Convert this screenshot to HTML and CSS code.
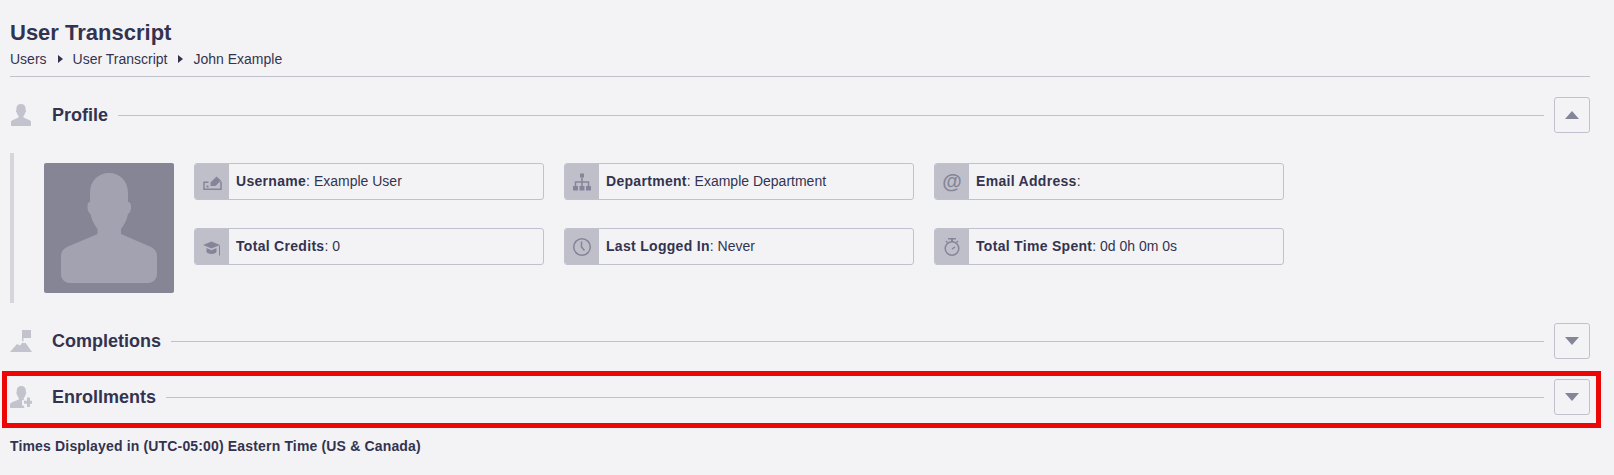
FILE: index.html
```html
<!DOCTYPE html>
<html lang="en">
<head>
<meta charset="utf-8">
<title>User Transcript</title>
<link rel="stylesheet" href="styles.css">
</head>
<body>
<main class="page">
  <header class="page-head">
    <h1 class="page-title">User Transcript</h1>
    <nav class="crumbs">
      <span>Users</span><i class="crumb-caret"></i>
      <span>User Transcript</span><i class="crumb-caret"></i>
      <span>John Example</span>
    </nav>
  </header>

  <section class="section">
    <div class="section-head">
      <span class="section-icon">
        <svg width="22" height="24" viewBox="0 0 22 24"><path class="sec-fill" d="M11 1C8 1 6.400 3 6.400 5.600v1.600c-.7.2-.7 1.700.3 2.200.3 1.400 1 2.600 1.800 3.500v1.700L2.800 17c-1.300.6-1.800 1.400-1.800 2.600V22c0 .6.400 1 1 1h18c.6 0 1-.4 1-1v-2.400c0-1.200-.5-2-1.800-2.600l-5.700-2.400v-1.700c.8-.9 1.500-2.100 1.800-3.500 1-.5 1-2 .3-2.200V5.600C15.600 3 14 1 11 1z"/></svg>
      </span>
      <h2 class="section-title">Profile</h2>
      <span class="section-rule"></span>
      <button class="toggle" type="button" aria-label="Collapse"><i class="tri tri-up"></i></button>
    </div>
    <div class="profile">
      <div class="avatar">
        <svg width="130" height="130" viewBox="0 0 130 130"><path class="avatar-shape" d="M65 10c-11 0-19 8-19 20v9c-2 0-2.500 2-2.500 5s1 6 3 7c1 6 4 11 7 15v5L23 84c-4 2-6 5-6 9v18c0 5 4 9 9 9h78c5 0 9-4 9-9V93c0-4-2-7-6-9L77 71v-5c3-4 6-9 7-15 2-1 3-4 3-7s-.5-5-3-5V30c0-12-8-20-19-20z"/></svg>
      </div>
      <div class="facts">
        <div class="fact">
          <span class="fact-icon">
            <svg width="20" height="20" viewBox="0 0 20 20"><path class="ico-line" d="M6.500 10.200H2v7h17v-7h-1"/><path class="ico-fill" d="M8.500 10.500l6-6 4.500 4-5.500 5.500H8.500zM4.500 13.500h2v2h-2z"/></svg>
          </span>
          <span class="fact-text"><b>Username</b>: Example User</span>
        </div>
        <div class="fact">
          <span class="fact-icon">
            <svg width="20" height="20" viewBox="0 0 20 20"><path class="ico-fill" d="M8 1.500h4v4H8zM1 14h5v4.500H1zM7.500 14h5v4.500h-5zM14 14h5v4.500h-5z"/><path class="ico-line" d="M10 5.500V14M3.500 14v-4h13v4"/></svg>
          </span>
          <span class="fact-text"><b>Department</b>: Example Department</span>
        </div>
        <div class="fact">
          <span class="fact-icon fact-at">@</span>
          <span class="fact-text"><b>Email Address</b>:</span>
        </div>
        <div class="fact">
          <span class="fact-icon">
            <svg width="20" height="20" viewBox="0 0 20 20"><path class="ico-fill" d="M9.500 4.500L1 8l8.500 3.500L18 8z"/><path class="ico-fill" d="M4.500 11v3.500c0 1.500 2.200 2.500 5 2.500s5-1 5-2.500V11l-5 2.200z"/><path class="ico-thin" d="M17.500 8.500v10"/></svg>
          </span>
          <span class="fact-text"><b>Total Credits</b>: 0</span>
        </div>
        <div class="fact">
          <span class="fact-icon">
            <svg width="20" height="20" viewBox="0 0 20 20"><circle class="ico-line" cx="10" cy="10" r="8.300"/><path class="ico-line" d="M9.500 4.500V10l3 3.500"/></svg>
          </span>
          <span class="fact-text"><b>Last Logged In</b>: Never</span>
        </div>
        <div class="fact">
          <span class="fact-icon">
            <svg width="20" height="20" viewBox="0 0 20 20"><path class="ico-fill" d="M6 1h8v1.500H6zM9 2.500h2v2.500H9zM3.500 4.500l1-1 1.500 1.500-1 1zM16.500 4.500l-1-1L14 5l1 1z"/><circle class="ico-line" cx="10" cy="11.500" r="6.800"/><path class="ico-line" d="M10 12l3-2"/></svg>
          </span>
          <span class="fact-text"><b>Total Time Spent</b>: 0d 0h 0m 0s</span>
        </div>
      </div>
    </div>
  </section>

  <section class="section">
    <div class="section-head">
      <span class="section-icon">
        <svg width="22" height="24" viewBox="0 0 22 24"><path class="sec-fill" d="M12 1h9v8h-7.500v3.500L12 11.800z"/><path class="sec-fill" d="M0 23l7-8 3 1.500 2.500-3 1.500.7 1.500-.5L22 23z"/></svg>
      </span>
      <h2 class="section-title">Completions</h2>
      <span class="section-rule"></span>
      <button class="toggle" type="button" aria-label="Expand"><i class="tri tri-down"></i></button>
    </div>
  </section>

  <section class="section section-marked">
    <div class="section-head">
      <span class="section-icon">
        <svg width="22" height="24" viewBox="0 0 22 24"><path class="sec-fill" d="M11.300 1C8.500 1 6.700 3 6.700 5.800v1.500c-.6.200-.6 1.600.3 2.100.3 1.400 1 2.600 1.800 3.500v1.700L2 17.200C.7 17.800 0 18.600 0 19.800V23h14.500l-1-2.500H12v-5l1.800-.8v-1.800c.8-.9 1.500-2.100 1.800-3.500.9-.5.900-1.900.3-2.100V5.800C15.900 3 14.100 1 11.300 1z"/><path class="sec-fill" d="M17 12.500h3v3.300h3v3h-3V22h-3v-3.200h-3v-3h3z"/></svg>
      </span>
      <h2 class="section-title">Enrollments</h2>
      <span class="section-rule"></span>
      <button class="toggle" type="button" aria-label="Expand"><i class="tri tri-down"></i></button>
    </div>
  </section>

  <p class="timezone">Times Displayed in (UTC-05:00) Eastern Time (US &amp; Canada)</p>
</main>
</body>
</html>
```

FILE: styles.css
```css
* { box-sizing: border-box; }

html, body {
  margin: 0;
  padding: 0;
}

body {
  background: #f3f3f6;
  color: #33334f;
  font-family: "Liberation Sans", Arial, sans-serif;
  font-size: 14px;
}

.page {
  height: 475px;
  padding: 20px 24px 0 10px;
  overflow: hidden;
}

.page-head {
  height: 57px;
  border-bottom: 1px solid #c1c1cd;
}

.page-title {
  margin: 0;
  font-size: 22px;
  line-height: 25px;
  font-weight: 700;
}

.crumbs {
  display: flex;
  align-items: center;
  margin-top: 5px;
  line-height: 18px;
}

.crumb-caret {
  width: 0;
  height: 0;
  margin: 0 10px 0 11px;
  border-left: 5px solid #33334f;
  border-top: 4px solid transparent;
  border-bottom: 4px solid transparent;
}

.section { margin-top: 20px; }

.section-head {
  display: flex;
  align-items: center;
  height: 36px;
}

.section-icon {
  display: flex;
  flex: none;
  width: 42px;
  height: 24px;
}

.sec-fill { fill: #c3c3ce; }

.section-title {
  margin: 0;
  font-size: 18px;
  line-height: 22px;
  font-weight: 700;
}

.section-rule {
  flex: 1;
  height: 1px;
  margin: 1px 10px 0;
  background: #c1c1cd;
}

.toggle {
  display: flex;
  align-items: center;
  justify-content: center;
  flex: none;
  width: 36px;
  height: 36px;
  padding: 0;
  background: transparent;
  border: 1px solid #c1c1cd;
  border-radius: 3px;
}

.tri {
  width: 0;
  height: 0;
  border-left: 7px solid transparent;
  border-right: 7px solid transparent;
}

.tri-up { border-bottom: 8px solid #85859a; }
.tri-down { border-top: 8px solid #85859a; }

.profile {
  display: flex;
  height: 150px;
  margin-top: 20px;
  padding: 10px 0 0 30px;
  border-left: 4px solid #d5d5dc;
}

.avatar {
  display: flex;
  flex: none;
  width: 130px;
  height: 130px;
  background: #858596;
  border-radius: 2px;
}

.avatar-shape { fill: #a2a2b0; }

.facts {
  display: grid;
  grid-template-columns: repeat(3, 350px);
  grid-auto-rows: 37px;
  column-gap: 20px;
  row-gap: 28px;
  margin-left: 20px;
}

.fact {
  display: flex;
  align-items: center;
  border: 1px solid #c1c1cd;
  border-radius: 3px;
  overflow: hidden;
}

.fact-icon {
  display: flex;
  align-items: center;
  justify-content: center;
  flex: none;
  width: 34px;
  align-self: stretch;
  background: #bfbfca;
}

.fact-at {
  color: #85859a;
  font-size: 20px;
  font-weight: 700;
}

.fact-text {
  padding-left: 7px;
  line-height: 18px;
  margin-top: -1px;
}

.fact-text b {
  font-weight: 700;
  letter-spacing: 0.3px;
}

.ico-fill { fill: #85859a; }

.ico-line,
.ico-thin {
  fill: none;
  stroke: #85859a;
  stroke-width: 1.500;
}

.ico-thin { stroke-width: 1; }

.section-marked { position: relative; }

.section-marked::after {
  content: "";
  position: absolute;
  top: -8px;
  right: -11px;
  bottom: -13px;
  left: -8px;
  border: 5px solid #ec0606;
  pointer-events: none;
}

.timezone {
  margin: 22px 0 0;
  font-size: 14px;
  line-height: 18px;
  font-weight: 700;
  letter-spacing: 0.16px;
}
```
